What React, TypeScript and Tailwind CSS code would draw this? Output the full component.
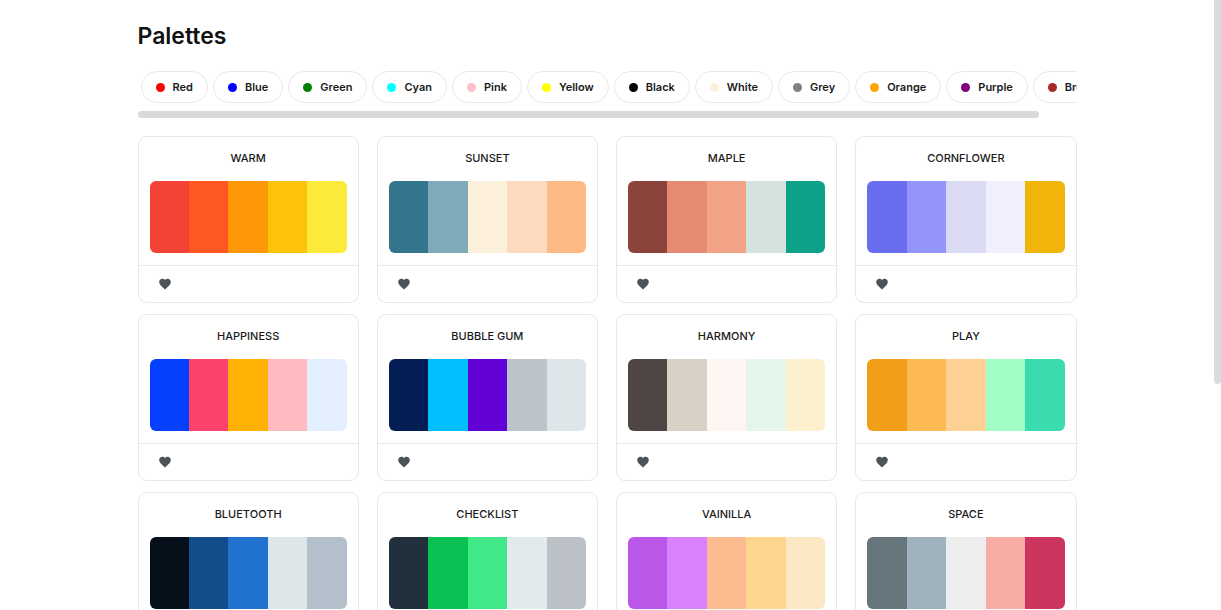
import React, { useState } from "react";
import { MdFavorite } from "react-icons/md";

interface ColorFilter {
    name: string;
    dot: string;
}

interface Palette {
    name: string;
    colors: string[];
}

const filters: ColorFilter[] = [
    { name: "Red", dot: "bg-[#ff0000]" },
    { name: "Blue", dot: "bg-[#0000ff]" },
    { name: "Green", dot: "bg-[#008000]" },
    { name: "Cyan", dot: "bg-[#00ffff]" },
    { name: "Pink", dot: "bg-[#ffc0cb]" },
    { name: "Yellow", dot: "bg-[#ffff00]" },
    { name: "Black", dot: "bg-black" },
    { name: "White", dot: "bg-[#faf0dc]" },
    { name: "Grey", dot: "bg-[#808080]" },
    { name: "Orange", dot: "bg-[#ffa500]" },
    { name: "Purple", dot: "bg-[#800080]" },
    { name: "Brown", dot: "bg-[#a52a2a]" },
];

const palettes: Palette[] = [
    { name: "WARM", colors: ["bg-[#f44336]", "bg-[#ff5722]", "bg-[#ff9807]", "bg-[#fdc20c]", "bg-[#fcea3a]"] },
    { name: "SUNSET", colors: ["bg-[#32758d]", "bg-[#7eaaba]", "bg-[#fef1dc]", "bg-[#fcdabf]", "bg-[#fdba84]"] },
    { name: "MAPLE", colors: ["bg-[#8c433b]", "bg-[#e68b73]", "bg-[#f3a486]", "bg-[#d4e3de]", "bg-[#0ea28a]"] },
    { name: "CORNFLOWER", colors: ["bg-[#6a6df0]", "bg-[#9394fc]", "bg-[#dbdbf4]", "bg-[#eff0fc]", "bg-[#f0b40a]"] },
    { name: "HAPPINESS", colors: ["bg-[#0540fe]", "bg-[#fd426d]", "bg-[#ffb204]", "bg-[#ffbbc0]", "bg-[#e3effe]"] },
    { name: "BUBBLE GUM", colors: ["bg-[#041e55]", "bg-[#02c0fd]", "bg-[#6202d6]", "bg-[#bcc3ca]", "bg-[#dde6e8]"] },
    { name: "HARMONY", colors: ["bg-[#504545]", "bg-[#d9d1c5]", "bg-[#fff5f2]", "bg-[#e4f5eb]", "bg-[#fdf0cd]"] },
    { name: "PLAY", colors: ["bg-[#f39e19]", "bg-[#fdb953]", "bg-[#fed295]", "bg-[#a0fec6]", "bg-[#3bdbb0]"] },
    { name: "BLUETOOTH", colors: ["bg-[#05101a]", "bg-[#124e8b]", "bg-[#2072ce]", "bg-[#dde6e8]", "bg-[#b3c0cb]"] },
    { name: "CHECKLIST", colors: ["bg-[#222f3c]", "bg-[#0ac153]", "bg-[#40e888]", "bg-[#e2ebec]", "bg-[#bcc1c7]"] },
    { name: "VAINILLA", colors: ["bg-[#bb57e8]", "bg-[#d781fc]", "bg-[#fcbc90]", "bg-[#fdd58d]", "bg-[#fce8c5]"] },
    { name: "SPACE", colors: ["bg-[#67757c]", "bg-[#9fb2bd]", "bg-[#ededee]", "bg-[#f7aca5]", "bg-[#cc355e]"] },
];

const FilterChip: React.FC<ColorFilter> = ({ name, dot }) => {
    return (
        <button
            type="button"
            className="flex h-8 shrink-0 items-center gap-2 rounded-full border border-[#e9e9ea] px-3.5 text-[11px] font-semibold text-[#1a1a1a]"
        >
            <span className={`size-[9px] rounded-full ${dot}`} />
            {name}
        </button>
    );
};

const PaletteCard: React.FC<Palette> = ({ name, colors }) => {
    const [liked, setLiked] = useState(false);

    return (
        <article className="rounded-[9px] border border-[#e8e8e9]">
            <div className="px-[11px] pb-3">
                <h2 className="flex h-11 items-center justify-center pb-0.5 text-[11px] font-medium text-[#1a1a1a]">
                    {name}
                </h2>
                <div className="flex h-[72px] overflow-hidden rounded-md">
                    {colors.map((color) => (
                        <div key={color} className={`flex-1 ${color}`} />
                    ))}
                </div>
            </div>
            <div className="flex h-[37px] items-center border-t border-[#e8e8e9] pl-[19px]">
                <button
                    type="button"
                    aria-label={`Like ${name}`}
                    aria-pressed={liked}
                    onClick={() => setLiked(!liked)}
                    className={liked ? "text-red-500" : "text-[#4e5357]"}
                >
                    <MdFavorite size={14} />
                </button>
            </div>
        </article>
    );
};

const App: React.FC = () => {
    return (
        <div className="flex h-screen overflow-hidden bg-white font-['Inter',sans-serif]">
            <main className="min-w-0 flex-1 overflow-y-auto [scrollbar-width:none]">
                <div className="mx-auto max-w-[939px] pt-5 pb-8">
                    <h1 className="text-[23px] leading-8 font-semibold text-[#111111]">Palettes</h1>

                    <div className="mt-[19px] flex gap-[5px] overflow-x-auto pl-[3px] [scrollbar-width:none]">
                        {filters.map((filter) => (
                            <FilterChip key={filter.name} {...filter} />
                        ))}
                    </div>
                    <div className="mt-2 h-[7px] w-[96%] rounded-full bg-[#d9d9db]" />

                    <section className="mt-[18px] grid grid-cols-4 gap-x-[18px] gap-y-[11px]">
                        {palettes.map((palette) => (
                            <PaletteCard key={palette.name} {...palette} />
                        ))}
                    </section>
                </div>
            </main>
            {/* page scroll thumb */}
            <div className="h-[63%] w-[7px] shrink-0 rounded-b-full bg-[#d7dddd]" />
        </div>
    );
};

export default App;
